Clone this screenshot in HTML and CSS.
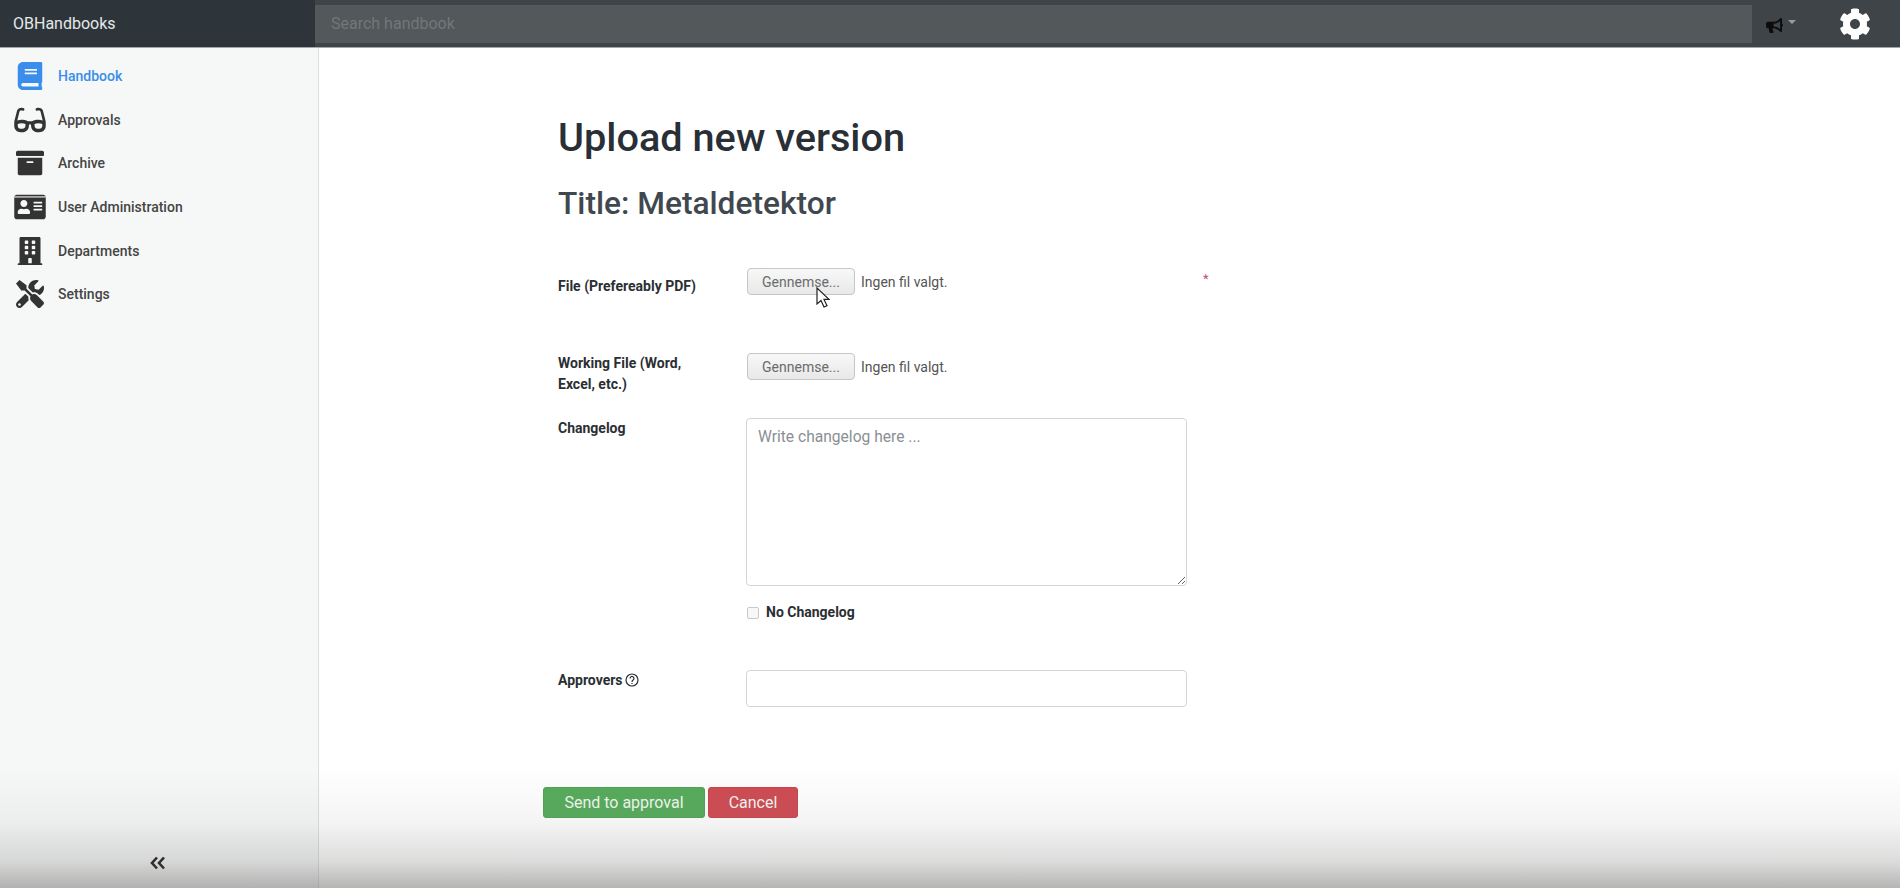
FILE: index.html
```html
<!DOCTYPE html>
<html>
<head>
    <title>OBHandbooks</title>
    <link rel="stylesheet" href="styles.css">
</head>
<body>
    <header class="topbar">
        <div class="brand">OBHandbooks</div>
        <div class="search">Search handbook</div>
        <div class="notify">
            <svg class="bullhorn" viewBox="0 0 576 512"><path d="M576 240c0-23.63-12.95-44.04-32-55.12V32.01C544 23.26 537.02 0 512 0c-7.12 0-14.19 2.38-19.98 7.02l-85.03 68.03C364.28 109.19 310.66 128 256 128H64c-35.35 0-64 28.65-64 64v96c0 35.35 28.65 64 64 64h33.7c-1.39 10.48-2.18 21.14-2.18 32 0 39.77 9.26 77.35 25.56 110.94 5.19 10.69 16.52 17.06 28.4 17.06h74.28c26.05 0 41.69-29.84 25.9-50.56-16.4-21.52-26.15-48.36-26.15-77.44 0-11.11 1.62-21.79 4.41-32H256c54.66 0 108.28 18.81 150.98 52.95l85.03 68.03a32.023 32.023 0 0 0 19.98 7.02c24.92 0 32-22.78 32-32V295.13C563.05 284.04 576 263.63 576 240zm-96 141.42l-33.05-26.44C392.95 311.78 325.12 288 256 288v-96c69.12 0 136.95-23.78 190.95-66.98L480 98.58v282.84z"/></svg>
            <span class="caret"></span>
        </div>
        <svg class="cog" viewBox="0 0 512 512"><path d="M487.4 315.7l-42.6-24.6c4.3-23.2 4.3-47 0-70.2l42.6-24.6c4.9-2.8 7.1-8.6 5.5-14-11.1-35.6-30-67.8-54.7-94.6-3.8-4.1-10-5.1-14.8-2.3L380.8 110c-17.9-15.4-38.5-27.3-60.8-35.1V25.8c0-5.6-3.9-10.5-9.4-11.7-36.7-8.2-74.3-7.8-109.2 0-5.5 1.2-9.4 6.1-9.4 11.7V75c-22.2 7.9-42.8 19.8-60.8 35.1L88.7 85.5c-4.9-2.8-11-1.9-14.8 2.3-24.7 26.7-43.6 58.9-54.7 94.6-1.7 5.4.6 11.2 5.5 14L67.3 221c-4.3 23.2-4.3 47 0 70.2l-42.6 24.6c-4.9 2.8-7.1 8.6-5.5 14 11.1 35.6 30 67.8 54.7 94.6 3.8 4.1 10 5.1 14.8 2.3l42.6-24.6c17.9 15.4 38.5 27.3 60.8 35.1v49.2c0 5.6 3.9 10.5 9.4 11.7 36.7 8.2 74.3 7.8 109.2 0 5.5-1.2 9.4-6.1 9.4-11.7v-49.2c22.2-7.9 42.8-19.8 60.8-35.1l42.6 24.6c4.9 2.8 11 1.9 14.8-2.3 24.7-26.7 43.6-58.9 54.7-94.6 1.5-5.5-.7-11.3-5.6-14.1zM256 336c-44.1 0-80-35.9-80-80s35.9-80 80-80 80 35.9 80 80-35.9 80-80 80z"/></svg>
    </header>

    <div class="layout">
        <aside class="sidebar">
            <nav class="menu">
                <a class="menu-item active">
                    <svg viewBox="0 0 448 512"><path d="M448 360V24c0-13.3-10.7-24-24-24H96C43 0 0 43 0 96v320c0 53 43 96 96 96h328c13.3 0 24-10.7 24-24v-16c0-7.5-3.5-14.3-8.9-18.7-4.2-15.4-4.2-59.3 0-74.7 5.4-4.3 8.9-11.1 8.9-18.6zM128 134c0-3.3 2.7-6 6-6h212c3.3 0 6 2.7 6 6v20c0 3.3-2.7 6-6 6H134c-3.3 0-6-2.7-6-6v-20zm0 64c0-3.3 2.7-6 6-6h212c3.3 0 6 2.7 6 6v20c0 3.3-2.7 6-6 6H134c-3.3 0-6-2.7-6-6v-20zm253.4 250H96c-17.7 0-32-14.3-32-32 0-17.6 14.4-32 32-32h285.4c-1.9 17.1-1.9 46.9 0 64z"/></svg>
                    Handbook
                </a>
                <a class="menu-item">
                    <svg viewBox="0 0 576 512"><path d="M574.1 280.37L528.75 98.66c-5.91-23.7-21.59-44.05-43-55.81-21.44-11.73-46.97-14.11-70.19-6.33l-15.25 5.08c-8.39 2.79-12.92 11.86-10.12 20.24l5.06 15.18c2.79 8.38 11.85 12.91 20.23 10.12l13.18-4.39c10.87-3.62 23-3.57 33.16 1.73 10.29 5.37 17.57 14.56 20.37 25.82l38.46 153.82c-22.19-6.81-49.79-12.46-81.2-12.46-34.77 0-73.98 7.02-114.85 26.74h-73.18c-40.87-19.74-80.08-26.75-114.86-26.75-31.42 0-59.02 5.65-81.21 12.46l38.46-153.82c2.79-11.25 10.09-20.45 20.38-25.81 10.16-5.3 22.28-5.35 33.15-1.73l13.17 4.39c8.38 2.79 17.44-1.74 20.23-10.12l5.06-15.18c2.8-8.38-1.73-17.45-10.12-20.24l-15.25-5.08c-23.22-7.78-48.75-5.41-70.19 6.33-21.41 11.77-37.09 32.11-43 55.8L1.9 280.37A64.218 64.218 0 0 0 0 295.86v70.25C0 429.21 51.58 480 115.2 480h37.12c60.28 0 110.37-45.94 114.88-105.37l2.93-38.63h35.75l2.93 38.63C313.31 434.06 363.4 480 423.68 480h37.12c63.62 0 115.2-50.79 115.2-113.88v-70.25c0-5.23-.64-10.43-1.9-15.5zm-370.72 89.42c-1.97 25.91-24.4 46.21-51.06 46.21H115.2C86.97 416 64 393.62 64 366.11v-37.54c18.12-6.49 43.42-12.92 72.58-12.92 23.86 0 47.26 4.33 69.93 12.92l-3.13 41.22zM512 366.12c0 27.51-22.97 49.88-51.2 49.88h-37.12c-26.67 0-49.1-20.3-51.06-46.21l-3.13-41.22c22.67-8.59 46.08-12.92 69.95-12.92 29.12 0 54.43 6.44 72.55 12.93v37.54z"/></svg>
                    Approvals
                </a>
                <a class="menu-item">
                    <svg viewBox="0 0 512 512"><path d="M32 448c0 17.7 14.3 32 32 32h384c17.7 0 32-14.3 32-32V160H32v288zm160-212c0-6.6 5.4-12 12-12h104c6.6 0 12 5.4 12 12v8c0 6.6-5.4 12-12 12H204c-6.6 0-12-5.4-12-12v-8zM480 32H32C14.3 32 0 46.3 0 64v48c0 8.8 7.2 16 16 16h480c8.8 0 16-7.2 16-16V64c0-17.7-14.3-32-32-32z"/></svg>
                    Archive
                </a>
                <a class="menu-item">
                    <svg viewBox="0 0 576 512"><path d="M528 32H48C21.5 32 0 53.5 0 80v352c0 26.5 21.5 48 48 48h480c26.5 0 48-21.5 48-48V80c0-26.5-21.5-48-48-48zm-352 96c35.3 0 64 28.7 64 64s-28.7 64-64 64-64-28.7-64-64 28.7-64 64-64zm112 236.8c0 10.6-10 19.2-22.4 19.2H86.4C74 384 64 375.4 64 364.8v-19.2c0-31.8 30.1-57.6 67.2-57.6h5c12.3 5.1 25.7 8 39.8 8s27.6-2.9 39.8-8h5c37.1 0 67.2 25.8 67.2 57.6v19.2zM512 312c0 4.4-3.6 8-8 8H360c-4.4 0-8-3.6-8-8v-16c0-4.4 3.6-8 8-8h144c4.4 0 8 3.6 8 8v16zm0-64c0 4.4-3.6 8-8 8H360c-4.4 0-8-3.6-8-8v-16c0-4.4 3.6-8 8-8h144c4.4 0 8 3.6 8 8v16zm0-64c0 4.4-3.6 8-8 8H360c-4.4 0-8-3.6-8-8v-16c0-4.4 3.6-8 8-8h144c4.4 0 8 3.6 8 8v16z"/><rect class="card-gap" x="0" y="62" width="576" height="20"/></svg>
                    User Administration
                </a>
                <a class="menu-item">
                    <svg viewBox="0 0 448 512"><path d="M436 480h-20V24c0-13.255-10.745-24-24-24H56C42.745 0 32 10.745 32 24v456H12c-6.627 0-12 5.373-12 12v20h448v-20c0-6.627-5.373-12-12-12zM128 76c0-6.627 5.373-12 12-12h40c6.627 0 12 5.373 12 12v40c0 6.627-5.373 12-12 12h-40c-6.627 0-12-5.373-12-12V76zm0 96c0-6.627 5.373-12 12-12h40c6.627 0 12 5.373 12 12v40c0 6.627-5.373 12-12 12h-40c-6.627 0-12-5.373-12-12v-40zm52 148h-40c-6.627 0-12-5.373-12-12v-40c0-6.627 5.373-12 12-12h40c6.627 0 12 5.373 12 12v40c0 6.627-5.373 12-12 12zm76 160h-64v-84c0-6.627 5.373-12 12-12h40c6.627 0 12 5.373 12 12v84zm64-172c0 6.627-5.373 12-12 12h-40c-6.627 0-12-5.373-12-12v-40c0-6.627 5.373-12 12-12h40c6.627 0 12 5.373 12 12v40zm0-96c0 6.627-5.373 12-12 12h-40c-6.627 0-12-5.373-12-12v-40c0-6.627 5.373-12 12-12h40c6.627 0 12 5.373 12 12v40zm0-96c0 6.627-5.373 12-12 12h-40c-6.627 0-12-5.373-12-12V76c0-6.627 5.373-12 12-12h40c6.627 0 12 5.373 12 12v40z"/></svg>
                    Departments
                </a>
                <a class="menu-item">
                    <svg viewBox="0 0 512 512"><path d="M501.1 395.7L384 278.6c-23.1-23.1-57.6-27.6-85.4-13.9L192 158.1V96L64 0 0 64l96 128h62.1l106.6 106.6c-13.6 27.8-9.2 62.3 13.9 85.4l117.1 117.1c14.6 14.6 38.2 14.6 52.7 0l52.7-52.7c14.5-14.6 14.5-38.2 0-52.7zM331.7 225c28.3 0 54.9 11 74.9 31l19.4 19.4c15.8-6.9 30.8-16.5 43.8-29.5 37.1-37.1 49.7-89.3 37.9-136.7-2.2-9-13.5-12.1-20.1-5.5l-74.4 74.4-67.9-11.3L334 98.9l74.4-74.4c6.6-6.6 3.4-17.9-5.7-20.2-47.4-11.7-99.6.9-136.6 37.9-28.5 28.5-41.9 66.1-41.2 103.6l82.1 82.1c8.1-1.9 16.5-2.9 24.7-2.9zm-103.9 82l-56.7-56.7L18.7 402.8c-25 25-25 65.5 0 90.5s65.5 25 90.5 0l123.6-123.6c-7.6-19.9-9.9-41.6-5-62.7zM64 472c-13.2 0-24-10.8-24-24 0-13.3 10.7-24 24-24s24 10.7 24 24c0 13.2-10.7 24-24 24z"/></svg>
                    Settings
                </a>
            </nav>
            <svg class="collapse" viewBox="0 0 16 14"><path d="M7 1.5 2 7l5 5.500M14 1.500 9 7l5 5.500"/></svg>
        </aside>

        <main class="content">
            <h1>Upload new version</h1>
            <h2>Title: Metaldetektor</h2>

            <form class="form">
                <div class="row row-file">
                    <label>File (Prefereably PDF)</label>
                    <div class="file-field">
                        <button type="button" class="file-btn">Gennemse...</button>
                        <span>Ingen fil valgt.</span>
                        <span class="required">*</span>
                    </div>
                </div>
                <div class="row row-working">
                    <label>Working File (Word, Excel, etc.)</label>
                    <div class="file-field">
                        <button type="button" class="file-btn">Gennemse...</button>
                        <span>Ingen fil valgt.</span>
                    </div>
                </div>
                <div class="row row-log">
                    <label>Changelog</label>
                    <div>
                        <textarea class="changelog" placeholder="Write changelog here ..."></textarea>
                        <label class="check"><input type="checkbox"> No Changelog</label>
                    </div>
                </div>
                <div class="row row-approvers">
                    <label>Approvers<svg class="help" viewBox="0 0 14 14"><circle cx="7" cy="7" r="6"/><path d="M5 5.400a2 2 0 1 1 3.100 1.700C7.400 7.600 7 8 7 8.900M7 10v1"/></svg></label>
                    <input type="text" class="approvers">
                </div>
                <div class="actions">
                    <button type="button" class="btn btn-send">Send to approval</button>
                    <button type="button" class="btn btn-cancel">Cancel</button>
                </div>
            </form>
        </main>
    </div>

    <!-- mouse pointer caught in the screenshot -->
    <svg class="pointer" viewBox="0 0 14 22"><path d="M1 1v16l4-3.500 3 6.500 3-1.300-3-6.300h5z"/></svg>
    <div class="fade"></div>
</body>
</html>
```

FILE: styles.css
```css
* {
    box-sizing: border-box;
}
html, body {
    margin: 0;
    height: 100%;
    overflow: hidden;
}
body {
    position: relative;
    background-color: white;
    color: #292b2c;
    font-family: Roboto, "Liberation Sans", sans-serif;
    font-size: 14px;
}

/* top bar */
.topbar {
    display: flex;
    align-items: center;
    height: 48px;
    background-color: #3f4448;
    border-bottom: 1px solid #a3a7a9;
}
.brand {
    display: flex;
    align-items: center;
    width: 315px;
    height: 100%;
    padding-left: 13px;
    background-color: #2d353a;
    color: #e6e8e8;
    font-size: 16px;
}
.search {
    display: flex;
    align-items: center;
    width: 1437px;
    height: 38px;
    padding-left: 16px;
    background-color: #53585b;
    color: #72777a;
    font-size: 16px;
}
.notify {
    display: flex;
    align-items: center;
    margin-left: 14px;
    gap: 5px;
}
.bullhorn {
    width: 17px;
    height: 15px;
    margin-top: 3px;
    fill: #0c0c0c;
}
.caret {
    margin-top: -3px;
    border-top: 4px solid #9a9d9f;
    border-left: 4px solid transparent;
    border-right: 4px solid transparent;
}
.cog {
    width: 32px;
    height: 32px;
    margin-left: 43px;
    fill: white;
}

/* sidebar */
.layout {
    display: flex;
    height: 840px;
}
.sidebar {
    position: relative;
    width: 319px;
    padding-top: 6.5px;
    background-color: #f6f8f7;
    border-right: 1px solid #dcdedd;
}
.menu-item {
    display: flex;
    align-items: center;
    gap: 12px;
    height: 43.6px;
    color: #454545;
    font-weight: 500;
}
.menu-item svg {
    width: 32px;
    height: 28px;
    margin-left: 14px;
    fill: #333;
}
.menu-item.active {
    color: #3a8dea;
}
.menu-item.active svg {
    fill: #3a8dea;
}
.card-gap {
    fill: #f6f8f7;
}
.collapse {
    position: absolute;
    left: 150px;
    bottom: 18px;
    width: 16px;
    height: 14px;
    fill: none;
    stroke: #111;
    stroke-width: 2.6;
}

/* form */
.content {
    flex: 1;
    padding-left: 224px;
}
h1 {
    margin: 67px 0 0 15px;
    font-size: 39.7px;
    line-height: 46px;
    font-weight: 500;
    color: #292f36;
}
h2 {
    margin: 23px 0 0 15px;
    font-size: 31.7px;
    line-height: 40px;
    font-weight: 500;
    color: #3f484f;
}
.row {
    display: grid;
    grid-template-columns: 188px 441px;
    margin-left: 15px;
}
.row > label {
    font-weight: 700;
    font-size: 14px;
    line-height: 21px;
    color: #2b2f33;
}
.row-file {
    margin-top: 44px;
}
.row-file > label {
    padding-top: 8px;
}
.row-working {
    margin-top: 56px;
}
.row-working > label {
    padding-right: 40px;
}
.row-log {
    margin-top: 23px;
}
.row-approvers {
    margin-top: 48px;
}
.file-field {
    position: relative;
    display: flex;
    align-items: flex-start;
    gap: 6px;
    padding-left: 1px;
    line-height: 28px;
    color: #555;
}
.file-btn {
    width: 108px;
    height: 27px;
    padding: 0;
    background: linear-gradient(#f8f8f8, #e8e8e8);
    border: 1px solid #c6c6c6;
    border-radius: 4px;
    color: #6b6b6b;
    font-family: inherit;
    font-size: 14px;
}
.required {
    position: absolute;
    left: 457px;
    top: -3px;
    color: #c0506a;
    font-size: 13px;
}
.changelog {
    display: block;
    width: 441px;
    height: 168px;
    padding: 8px 11px;
    background-color: white;
    border: 1px solid #d5d5d5;
    border-radius: 4px;
    font-family: inherit;
    font-size: 15.6px;
    line-height: 20px;
}
.changelog::placeholder {
    color: #8a8f94;
}
.check {
    display: flex;
    align-items: center;
    gap: 7px;
    margin-top: 16px;
    font-weight: 700;
    line-height: 20px;
    color: #2b2f33;
}
.check input {
    appearance: none;
    width: 12px;
    height: 12px;
    margin: 1px 0 0 1px;
    background-color: #f8f8f8;
    border: 1px solid #c8c8c8;
    border-radius: 2px;
}
.help {
    width: 14px;
    height: 14px;
    margin-left: 2px;
    vertical-align: -2px;
    fill: none;
    stroke: #2b2f33;
    stroke-width: 1.2;
}
.approvers {
    width: 441px;
    height: 37px;
    background-color: white;
    border: 1px solid #d5d5d5;
    border-radius: 4px;
}
.actions {
    display: flex;
    gap: 3px;
    margin-top: 80px;
}
.btn {
    height: 31px;
    padding: 0;
    border: 1px solid transparent;
    border-radius: 3px;
    color: #f2f7f2;
    font-family: inherit;
    font-size: 16px;
}
.btn-send {
    width: 162px;
    background-color: #55ab5a;
    border-color: #4ea353;
}
.btn-cancel {
    width: 90px;
    background-color: #cf4a52;
    border-color: #c8444c;
}

/* overlays */
.pointer {
    position: absolute;
    left: 816px;
    top: 287px;
    width: 14px;
    height: 22px;
    fill: white;
    stroke: #222;
    stroke-width: 1.2;
}
.fade {
    position: absolute;
    left: 0;
    right: 0;
    bottom: 0;
    height: 120px;
    background: linear-gradient(rgba(120,120,118,0), rgba(120,120,118,0.08) 45%, rgba(120,120,118,0.26) 78%, rgba(120,120,118,0.55));
    pointer-events: none;
}
```
